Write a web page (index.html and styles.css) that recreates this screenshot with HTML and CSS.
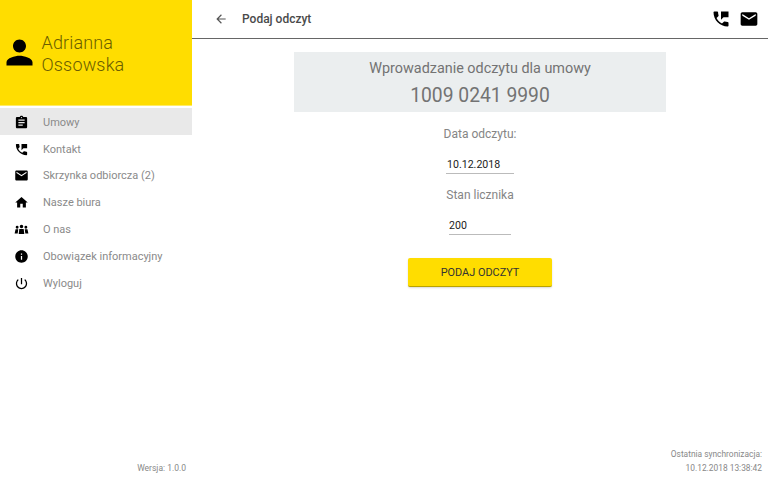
FILE: index.html
```html
<!DOCTYPE html>
<html lang="pl">
<head>
<meta charset="utf-8">
<title>Podaj odczyt</title>
<link rel="stylesheet" href="styles.css">
</head>
<body>
<div class="app">
  <aside class="sidebar">
    <div class="profile">
      <svg class="profile-icon" viewBox="0 0 24 24"><path d="M12 12c2.21 0 4-1.79 4-4s-1.79-4-4-4-4 1.79-4 4 1.79 4 4 4zm0 2c-2.67 0-8 1.34-8 4v2h16v-2c0-2.66-5.33-4-8-4z"/></svg>
      <div class="profile-name">Adrianna<br>Ossowska</div>
    </div>
    <nav class="menu">
      <a class="item active"><svg viewBox="0 0 24 24"><path d="M19 3h-4.18C14.4 1.84 13.3 1 12 1c-1.3 0-2.4.84-2.82 2H5c-1.1 0-2 .9-2 2v14c0 1.1.9 2 2 2h14c1.1 0 2-.9 2-2V5c0-1.1-.9-2-2-2zm-7 0c.55 0 1 .45 1 1s-.45 1-1 1-1-.45-1-1 .45-1 1-1zm2 14H7v-2h7v2zm3-4H7v-2h10v2zm0-4H7V7h10v2z"/></svg><span>Umowy</span></a>
      <a class="item"><svg viewBox="0 0 24 24"><path d="M20 15.5c-1.25 0-2.45-.2-3.57-.57-.35-.11-.74-.03-1.02.24l-2.2 2.2c-2.83-1.44-5.15-3.75-6.59-6.59l2.2-2.21c.28-.26.36-.65.25-1C8.7 6.45 8.5 5.25 8.5 4c0-.55-.45-1-1-1H4c-.55 0-1 .45-1 1 0 9.39 7.61 17 17 17 .55 0 1-.45 1-1v-3.5c0-.55-.45-1-1-1zM12 3v10l3-3h6V3h-9z"/></svg><span>Kontakt</span></a>
      <a class="item"><svg viewBox="0 0 24 24"><path d="M20 4H4c-1.1 0-1.99.9-1.99 2L2 18c0 1.1.9 2 2 2h16c1.1 0 2-.9 2-2V6c0-1.1-.9-2-2-2zm0 4l-8 5-8-5V6l8 5 8-5v2z"/></svg><span>Skrzynka odbiorcza (2)</span></a>
      <a class="item"><svg viewBox="0 0 24 24"><path d="M10 20v-6h4v6h5v-8h3L12 3 2 12h3v8z"/></svg><span>Nasze biura</span></a>
      <a class="item"><svg viewBox="0 0 24 24"><path d="M12 4.500a2.800 2.800 0 1 1 0 5.600 2.800 2.800 0 0 1 0-5.600zM5 6a2.300 2.300 0 1 1 0 4.600A2.300 2.300 0 0 1 5 6zM19 6a2.300 2.300 0 1 1 0 4.600A2.300 2.300 0 0 1 19 6zM8.500 11h7l1 8h-9zM2.500 11.500h4.300L5.900 18.500H1zM17.200 11.500h4.300l1.500 7h-4.900z"/></svg><span>O nas</span></a>
      <a class="item"><svg viewBox="0 0 24 24"><path d="M12 2C6.48 2 2 6.48 2 12s4.48 10 10 10 10-4.48 10-10S17.52 2 12 2zm1 15h-2v-6h2v6zm0-8h-2V7h2v2z"/></svg><span>Obowiązek informacyjny</span></a>
      <a class="item"><svg viewBox="0 0 24 24"><path d="M13 3h-2v10h2V3zm4.830 2.170l-1.420 1.420C17.990 7.860 19 9.810 19 12c0 3.870-3.130 7-7 7s-7-3.130-7-7c0-2.190 1.010-4.140 2.580-5.420L6.170 5.170C4.230 6.820 3 9.260 3 12c0 4.970 4.030 9 9 9s9-4.030 9-9c0-2.740-1.230-5.180-3.170-6.830z"/></svg><span>Wyloguj</span></a>
    </nav>
    <div class="version">Wersja: 1.0.0</div>
  </aside>
  <main class="main">
    <header class="topbar">
      <svg class="back" viewBox="0 0 24 24"><path d="M20 11H7.830l5.590-5.590L12 4l-8 8 8 8 1.410-1.410L7.830 13H20v-2z"/></svg>
      <h1 class="title">Podaj odczyt</h1>
      <div class="actions">
        <svg viewBox="0 0 24 24"><path d="M20 15.500c-1.250 0-2.450-.2-3.570-.57-.35-.11-.74-.03-1.020.24l-2.200 2.200c-2.830-1.440-5.150-3.750-6.590-6.590l2.200-2.210c.28-.26.36-.65.25-1C8.700 6.450 8.500 5.250 8.500 4c0-.55-.45-1-1-1H4c-.55 0-1 .45-1 1 0 9.390 7.610 17 17 17 .55 0 1-.45 1-1v-3.500c0-.55-.45-1-1-1zM12 3v10l3-3h6V3h-9z"/></svg>
        <svg viewBox="0 0 24 24"><path d="M20 4H4c-1.100 0-1.990.9-1.990 2L2 18c0 1.100.9 2 2 2h16c1.100 0 2-.9 2-2V6c0-1.100-.9-2-2-2zm0 4l-8 5-8-5V6l8 5 8-5v2z"/></svg>
      </div>
    </header>
    <section class="content">
      <div class="banner">
        <div class="banner-title">Wprowadzanie odczytu dla umowy</div>
        <div class="banner-number">1009 0241 9990</div>
      </div>
      <div class="label label-date">Data odczytu:</div>
      <div class="field field-date">10.12.2018</div>
      <div class="label label-meter">Stan licznika</div>
      <div class="field field-meter">200</div>
      <button class="submit">PODAJ ODCZYT</button>
    </section>
    <div class="sync">Ostatnia synchronizacja:<br>10.12.2018 13:38:42</div>
  </main>
</div>
</body>
</html>
```
FILE: styles.css
```css
* { box-sizing: border-box; }
html, body { margin: 0; height: 100%; }
body { font-family: Roboto, "Liberation Sans", sans-serif; background: #fff; overflow: hidden; }
.app { display: flex; width: 768px; height: 480px; }

.sidebar { width: 192px; flex: none; display: flex; flex-direction: column; }
.profile { height: 106px; background: #ffdd00; display: flex; align-items: flex-start; padding: 32px 0 0 0; border-bottom: 1px solid #ffec66; }
.profile-icon { width: 39px; height: 39px; margin-top: 1px; fill: #000; flex: none; }
.profile-name { margin-left: 2.500px; font-size: 18px; line-height: 21.500px; font-weight: 300; color: #6b5d00; letter-spacing: 0.15px; }
.menu { margin-top: 2px; display: flex; flex-direction: column; }
.item { height: 26.800px; display: flex; align-items: center; padding: 2px 0 0 13.500px; font-size: 11px; color: #8a8a8a; }
.item svg { width: 15px; height: 15px; fill: #000; flex: none; }
.item span { margin-left: 14.500px; }
.item.active { background: #e9e9e9; }
.version { margin-top: auto; padding: 0 6px 6px 0; text-align: right; font-size: 8.500px; line-height: 11px; color: #888; }

.main { flex: 1; min-width: 0; display: flex; flex-direction: column; }
.topbar { height: 39px; flex: none; display: flex; align-items: center; border-bottom: 1px solid #666; padding: 0 9px 0 22px; }
.back { width: 14px; height: 14px; fill: #555; flex: none; }
.title { margin: 0 0 0 14px; font-size: 12px; font-weight: 500; color: #4a4a4a; }
.actions { margin-left: auto; display: flex; gap: 8.500px; margin-top: -1px; }
.actions svg { width: 20px; height: 20px; fill: #000; }

.content { display: flex; flex-direction: column; align-items: center; padding-top: 13px; }
.banner { width: 372px; height: 60px; background: #ebeeef; display: flex; flex-direction: column; align-items: center; color: #737373; padding-top: 7px; }
.banner-title { font-size: 14.400px; line-height: 18px; margin-top: 0.500px; }
.banner-number { font-size: 19.300px; line-height: 24px; margin-top: 6px; }
.label { font-size: 12px; line-height: 15px; color: #858585; }
.label-date { margin-top: 14.500px; }
.field { border-bottom: 1px solid #bbb; font-size: 10.600px; line-height: 14px; color: #222; padding-bottom: 1px; }
.field-date { width: 68px; margin-top: 16.500px; padding-left: 1px; }
.label-meter { margin-top: 14px; }
.field-meter { width: 62px; margin-top: 16px; }
.submit { margin-top: 23px; width: 144px; height: 29px; border: 0; border-bottom: 1px solid #b9a200; background: #ffdd00; border-radius: 2px; font-family: inherit; font-size: 10.900px; color: #333; box-shadow: 0 1px 2px rgba(0,0,0,.15); padding: 0; }

.sync { margin-top: auto; padding: 0 6px 5px 0; text-align: right; font-size: 8.400px; line-height: 14px; color: #888; }
```
